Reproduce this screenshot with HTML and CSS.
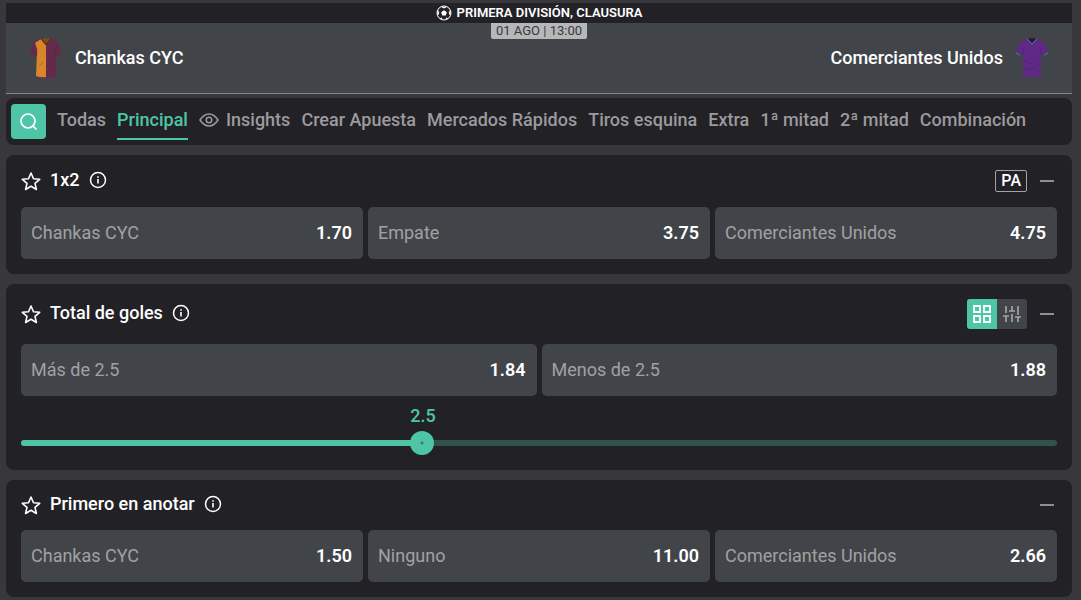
FILE: index.html
```
<!DOCTYPE html>
<html lang="es">

<head>
    <meta charset="UTF-8">
    <meta name="viewport" content="width=device-width, initial-scale=1.0">
    <title>Chankas CYC - Comerciantes Unidos</title>
    <link rel="stylesheet" href="styles.css">
</head>

<body>
    <svg class="symbols" aria-hidden="true">
        <symbol id="star" viewBox="0 0 20 20">
            <path d="M10 2l2.500 5.700 6.200.6-4.700 4.100 1.400 6.100-5.400-3.200-5.400 3.200L6 12.400 1.300 8.300l6.200-.6z" fill="none" stroke="currentColor" stroke-width="1.600" stroke-linejoin="round"/>
        </symbol>
        <symbol id="info" viewBox="0 0 18 18">
            <circle cx="9" cy="9" r="7.500" fill="none" stroke="currentColor" stroke-width="1.500"/>
            <path d="M9 8v4.600M9 5.200v1.600" stroke="currentColor" stroke-width="1.600"/>
        </symbol>
    </svg>

    <header class="match">
        <div class="league">
            <svg class="ball" viewBox="0 0 16 16">
                <circle cx="8" cy="8" r="7" fill="none" stroke="#fff" stroke-width="1"/>
                <path d="M8 5.200l2.800 2-1 3.300H6.200l-1-3.300z" fill="#fff"/>
                <path d="M5.500 1.500L8 2.800l2.500-1.300M14.500 5.500l-1 2 .8 2.500M11.500 13.800l-1.500-.6M4.500 13.800l1.500-.6M1.500 5.500l1 2-.8 2.500" fill="none" stroke="#fff" stroke-width="1.400"/>
            </svg>
            <span>PRIMERA DIVISIÓN, CLAUSURA</span>
        </div>
        <div class="teams">
            <div class="team">
                <svg class="shirt" viewBox="0 0 34 42">
                    <path d="M12 2Q6 3 4 7L1 16q2 3 6 3l1-3v24q9 2 19 0V16l1 3q4 0 5-3L30 7q-2-4-8-5-5-2-10 0z" fill="#642a49"/>
                    <path d="M12 2L6 6q2 4 2 10l-1 23q5 2 10 1V8z" fill="#d9862b"/>
                    <path d="M12 2q5-2 10 0l-5 6z" fill="#7b4a17"/>
                    <path d="M12 2l5 6 5-6" fill="none" stroke="#4a2035"/>
                    <path d="M8 11v8M10 29l4-4M27 10v9M26 23l-5 8" fill="none" stroke="#44203a" stroke-opacity=".3"/>
                </svg>
                <span>Chankas CYC</span>
            </div>
            <time class="date">01 AGO | 13:00</time>
            <div class="team">
                <span>Comerciantes Unidos</span>
                <svg class="shirt" viewBox="0 0 34 42">
                    <path d="M12 2Q6 3 4 7L1 16q2 3 5 2l2-3v24q9 3 18 0V15l2 3q3 1 5-2L30 7q-2-4-8-5-5-2-10 0z" fill="#5f2a86"/>
                    <path d="M13 2q4-2 8 0l-4 5z" fill="#2b193b"/>
                    <path d="M12 2l5 5 5-5M1 16l4 2M33 16l-4 2" fill="none" stroke="#3f8a80"/>
                    <path d="M9 23l7 4 7-6M9 31l6 2 9-5M8 9v9M26 9v9" fill="none" stroke="#44206a" stroke-opacity=".5"/>
                </svg>
            </div>
        </div>
    </header>

    <nav class="tabs">
        <button class="search" aria-label="Buscar">
            <svg viewBox="0 0 20 20">
                <circle cx="9" cy="9" r="7" fill="none" stroke="#fff" stroke-width="1.700"/>
                <path d="M14 14l3 3" stroke="#fff" stroke-width="1.700" stroke-linecap="round"/>
            </svg>
        </button>
        <a class="tab" href="#">Todas</a>
        <a class="tab active" href="#">Principal</a>
        <a class="tab" href="#">
            <svg class="eye" viewBox="0 0 20 14" fill="none" stroke="currentColor" stroke-width="1.500">
                <path d="M1 7q4-6 9-6t9 6q-4 6-9 6T1 7z"/>
                <circle cx="10" cy="7" r="2.800"/>
            </svg>
            Insights
        </a>
        <a class="tab" href="#">Crear Apuesta</a>
        <a class="tab" href="#">Mercados Rápidos</a>
        <a class="tab" href="#">Tiros esquina</a>
        <a class="tab" href="#">Extra</a>
        <a class="tab" href="#">1ª mitad</a>
        <a class="tab" href="#">2ª mitad</a>
        <a class="tab" href="#">Combinación</a>
    </nav>

    <main>
        <section class="card">
            <div class="card-head">
                <button class="icon-btn" aria-label="Favorito"><svg class="star"><use href="#star"/></svg></button>
                <h2>1x2</h2>
                <button class="icon-btn" aria-label="Información"><svg class="info"><use href="#info"/></svg></button>
                <div class="tools">
                    <span class="badge">PA</span>
                    <button class="collapse" aria-label="Contraer"></button>
                </div>
            </div>
            <div class="odds">
                <button class="odd"><span>Chankas CYC</span><b>1.70</b></button>
                <button class="odd"><span>Empate</span><b>3.75</b></button>
                <button class="odd"><span>Comerciantes Unidos</span><b>4.75</b></button>
            </div>
        </section>

        <section class="card">
            <div class="card-head">
                <button class="icon-btn" aria-label="Favorito"><svg class="star"><use href="#star"/></svg></button>
                <h2>Total de goles</h2>
                <button class="icon-btn" aria-label="Información"><svg class="info"><use href="#info"/></svg></button>
                <div class="tools">
                    <div class="switch">
                        <button class="view on" aria-label="Cuadrícula">
                            <svg viewBox="0 0 18 18" fill="none" stroke="#fff" stroke-width="1.800">
                                <path d="M1 1h6v6H1zM11 1h6v6h-6zM1 11h6v6H1zM11 11h6v6h-6z"/>
                            </svg>
                        </button>
                        <button class="view" aria-label="Deslizador">
                            <svg viewBox="0 0 18 18" fill="none" stroke="#a3a3a5" stroke-width="1.700">
                                <path d="M3 1v7M0 11h6M3 11v6M9 1v5M6 6h6M9 9v8M15 1v9M12 12h6M15 12v5"/>
                            </svg>
                        </button>
                    </div>
                    <button class="collapse" aria-label="Contraer"></button>
                </div>
            </div>
            <div class="odds">
                <button class="odd"><span>Más de 2.5</span><b>1.84</b></button>
                <button class="odd"><span>Menos de 2.5</span><b>1.88</b></button>
            </div>
            <div class="slider" style="--pos: 38.8%">
                <label class="slider-value" for="goals">2.5</label>
                <input type="range" id="goals" min="0" max="6.5" step="0.5" value="2.5">
            </div>
        </section>

        <section class="card">
            <div class="card-head">
                <button class="icon-btn" aria-label="Favorito"><svg class="star"><use href="#star"/></svg></button>
                <h2>Primero en anotar</h2>
                <button class="icon-btn" aria-label="Información"><svg class="info"><use href="#info"/></svg></button>
                <div class="tools">
                    <button class="collapse" aria-label="Contraer"></button>
                </div>
            </div>
            <div class="odds">
                <button class="odd"><span>Chankas CYC</span><b>1.50</b></button>
                <button class="odd"><span>Ninguno</span><b>11.00</b></button>
                <button class="odd"><span>Comerciantes Unidos</span><b>2.66</b></button>
            </div>
        </section>
    </main>
</body>

</html>
```

FILE: styles.css
```
* {
    box-sizing: border-box;
}

body {
    margin: 0;
    padding: 3px 9px 3px 6px;
    background: #38373c;
    color: #fff;
    font-family: Roboto, "Liberation Sans", sans-serif;
    font-size: 18px;
    line-height: 20px;
}

button {
    margin: 0;
    padding: 0;
    border: 0;
    background: none;
    color: inherit;
    font: inherit;
    cursor: pointer;
}

svg {
    display: block;
}

.symbols {
    display: none;
}

/* match header */
.league {
    display: flex;
    align-items: center;
    justify-content: center;
    gap: 5px;
    height: 20px;
    background: #222126;
    font-size: 13px;
    font-weight: 600;
}

.ball {
    width: 16px;
    height: 16px;
}

.teams {
    display: grid;
    grid-template-columns: 1fr auto 1fr;
    height: 71px;
    padding: 0 23px;
    background: #414549;
    border-bottom: 1px solid #85868a;
}

.team {
    display: flex;
    align-items: center;
    gap: 12px;
    font-weight: 500;
}

.team:last-child {
    justify-content: flex-end;
}

.shirt {
    width: 34px;
    height: 42px;
}

.date {
    align-self: start;
    padding: 0 5px;
    border-radius: 0 0 2px 2px;
    background: #b5b7b9;
    color: #38393d;
    font-size: 13px;
    line-height: 16px;
}

/* tabs */
.tabs {
    display: flex;
    align-items: center;
    gap: 11px;
    height: 47px;
    margin-top: 4px;
    padding: 0 5px;
    border-radius: 8px;
    background: #222126;
}

.search {
    display: grid;
    place-items: center;
    width: 35px;
    height: 35px;
    border-radius: 4px;
    background: #4fc5a7;
}

.search svg {
    width: 20px;
    height: 20px;
}

.tab {
    display: flex;
    align-items: center;
    gap: 7px;
    height: 37px;
    padding-bottom: 2px;
    border-bottom: 2px solid transparent;
    color: #9b9a9d;
    font-weight: 500;
    text-decoration: none;
    white-space: nowrap;
}

.tab.active {
    border-color: #4fc5a7;
    color: #4fc5a7;
}

.eye {
    width: 20px;
    height: 14px;
}

/* markets */
.card {
    margin-top: 10px;
    padding: 15px;
    border-radius: 8px;
    background: #222126;
}

.card-head {
    display: flex;
    align-items: center;
    gap: 9px;
    margin-bottom: 15px;
}

.card-head h2 {
    margin: 0;
    padding-bottom: 2px;
    font-size: 18px;
    font-weight: 500;
    line-height: 18px;
}

.icon-btn {
    display: flex;
    align-items: center;
    height: 20px;
}

.star {
    width: 20px;
    height: 20px;
}

.info {
    width: 18px;
    height: 18px;
    margin-bottom: 2px;
}

.tools {
    display: flex;
    align-items: center;
    gap: 13px;
    min-height: 20px;
    margin-left: auto;
    padding-right: 3px;
}

.badge {
    padding: 0 5px;
    border: 1px solid #a3a3a5;
    border-radius: 2px;
    font-size: 16px;
    font-weight: 500;
}

.collapse {
    width: 14px;
    height: 2px;
    background: #8f8f92;
}

.switch {
    display: flex;
    overflow: hidden;
    border-radius: 3px;
    background: #414549;
}

.view {
    display: grid;
    place-items: center;
    width: 30px;
    height: 30px;
}

.view.on {
    background: #4fc5a7;
}

.view svg {
    width: 18px;
    height: 18px;
}

.odds {
    display: flex;
    gap: 5px;
}

.odd {
    display: flex;
    flex: 1 1 0;
    align-items: center;
    justify-content: space-between;
    height: 52px;
    padding: 0 11px 0 10px;
    border-radius: 5px;
    background: #414549;
}

.odd span {
    color: #a0a1a4;
}

.odd b {
    font-weight: 600;
}

/* goals slider */
.slider {
    position: relative;
    padding-top: 35px;
}

.slider-value {
    position: absolute;
    top: 10px;
    left: var(--pos);
    transform: translateX(-50%);
    color: #4fc5a7;
    font-weight: 500;
}

.slider input {
    -webkit-appearance: none;
    appearance: none;
    display: block;
    width: 100%;
    height: 24px;
    margin: 0;
    background: none;
}

.slider input::-webkit-slider-runnable-track {
    height: 6px;
    border-radius: 3px;
    background: linear-gradient(to right, #4fc5a7 var(--pos), #31524b var(--pos));
}

.slider input::-webkit-slider-thumb {
    -webkit-appearance: none;
    width: 24px;
    height: 24px;
    margin-top: -9px;
    border-radius: 50%;
    background: radial-gradient(circle, #3f7f70 1px, #4fc5a7 2px);
}
```
